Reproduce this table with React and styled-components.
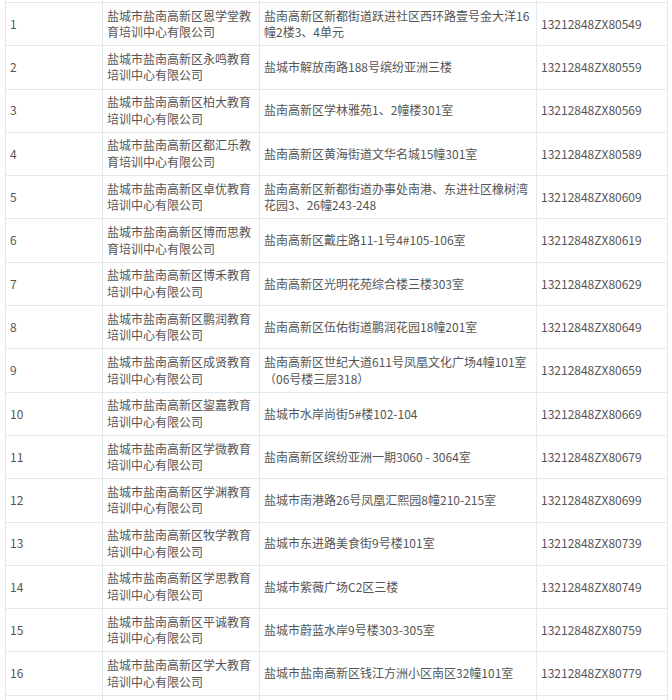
import React from "react";
import styled, { createGlobalStyle } from "styled-components";

// list of licensed training centres, scrolled so only the body rows show
const rows = [
  ["1", "盐城市盐南高新区恩学堂教育培训中心有限公司", "盐南高新区新都街道跃进社区西环路壹号金大洋16幢2楼3、4单元", "13212848ZX80549"],
  ["2", "盐城市盐南高新区永鸣教育培训中心有限公司", "盐城市解放南路188号缤纷亚洲三楼", "13212848ZX80559"],
  ["3", "盐城市盐南高新区柏大教育培训中心有限公司", "盐南高新区学林雅苑1、2幢楼301室", "13212848ZX80569"],
  ["4", "盐城市盐南高新区都汇乐教育培训中心有限公司", "盐南高新区黄海街道文华名城15幢301室", "13212848ZX80589"],
  ["5", "盐城市盐南高新区卓优教育培训中心有限公司", "盐南高新区新都街道办事处南港、东进社区橡树湾花园3、26幢243-248", "13212848ZX80609"],
  ["6", "盐城市盐南高新区博而思教育培训中心有限公司", "盐南高新区戴庄路11-1号4#105-106室", "13212848ZX80619"],
  ["7", "盐城市盐南高新区博禾教育培训中心有限公司", "盐南高新区光明花苑综合楼三楼303室", "13212848ZX80629"],
  ["8", "盐城市盐南高新区鹏润教育培训中心有限公司", "盐南高新区伍佑街道鹏润花园18幢201室", "13212848ZX80649"],
  ["9", "盐城市盐南高新区成贤教育培训中心有限公司", "盐南高新区世纪大道611号凤凰文化广场4幢101室（06号楼三层318）", "13212848ZX80659"],
  ["10", "盐城市盐南高新区鋆嘉教育培训中心有限公司", "盐城市水岸尚街5#楼102-104", "13212848ZX80669"],
  ["11", "盐城市盐南高新区学微教育培训中心有限公司", "盐南高新区缤纷亚洲一期3060 - 3064室", "13212848ZX80679"],
  ["12", "盐城市盐南高新区学渊教育培训中心有限公司", "盐城市南港路26号凤凰汇熙园8幢210-215室", "13212848ZX80699"],
  ["13", "盐城市盐南高新区牧学教育培训中心有限公司", "盐城市东进路美食街9号楼101室", "13212848ZX80739"],
  ["14", "盐城市盐南高新区学思教育培训中心有限公司", "盐城市紫薇广场C2区三楼", "13212848ZX80749"],
  ["15", "盐城市盐南高新区平诚教育培训中心有限公司", "盐城市蔚蓝水岸9号楼303-305室", "13212848ZX80759"],
  ["16", "盐城市盐南高新区学大教育培训中心有限公司", "盐城市盐南高新区钱江方洲小区南区32幢101室", "13212848ZX80779"],
];

const colWidths = [97, 157, 277, 131];

const GlobalStyle = createGlobalStyle`
  body {
    margin: 0;
    background: #ffffff;
    font-family: "Noto Sans CJK SC", "Noto Sans", sans-serif;
    overflow: hidden;
  }
`;

const Page = styled.div`
  padding-left: 5px;
  height: 700px;
  overflow: hidden;
`;

const Table = styled.table`
  width: 662px;
  table-layout: fixed;
  border-collapse: collapse;
  color: #555555;
  font-size: 12px;
`;

const Col = styled.col`
  width: ${(p) => p.$w}px;
`;

const Cell = styled.td`
  border: 1px solid #e1e9f1;
  padding: 4px;
  height: 34.3px;
  line-height: 16.6px;
  vertical-align: middle;
  word-break: break-all;
  text-align: left;
`;

// the tail of the row scrolled away above / below the visible part
const EdgeCell = styled.td`
  border: 1px solid #e1e9f1;
  border-top: none;
  padding: 0;
  height: 2px;
`;

const EdgeRow = () => (
  <tr>
    {colWidths.map((w) => (
      <EdgeCell key={w} />
    ))}
  </tr>
);

const App = () => {
  return (
    <Page>
      <GlobalStyle />
      <Table>
        <colgroup>
          {colWidths.map((w) => (
            <Col key={w} $w={w} />
          ))}
        </colgroup>
        <tbody>
          <EdgeRow />
          {rows.map((r) => (
            <tr key={r[0]}>
              {r.map((text, i) => (
                <Cell key={i}>{text}</Cell>
              ))}
            </tr>
          ))}
          <tr>
            {colWidths.map((w) => (
              <Cell key={w} />
            ))}
          </tr>
        </tbody>
      </Table>
    </Page>
  );
};

export default App;
